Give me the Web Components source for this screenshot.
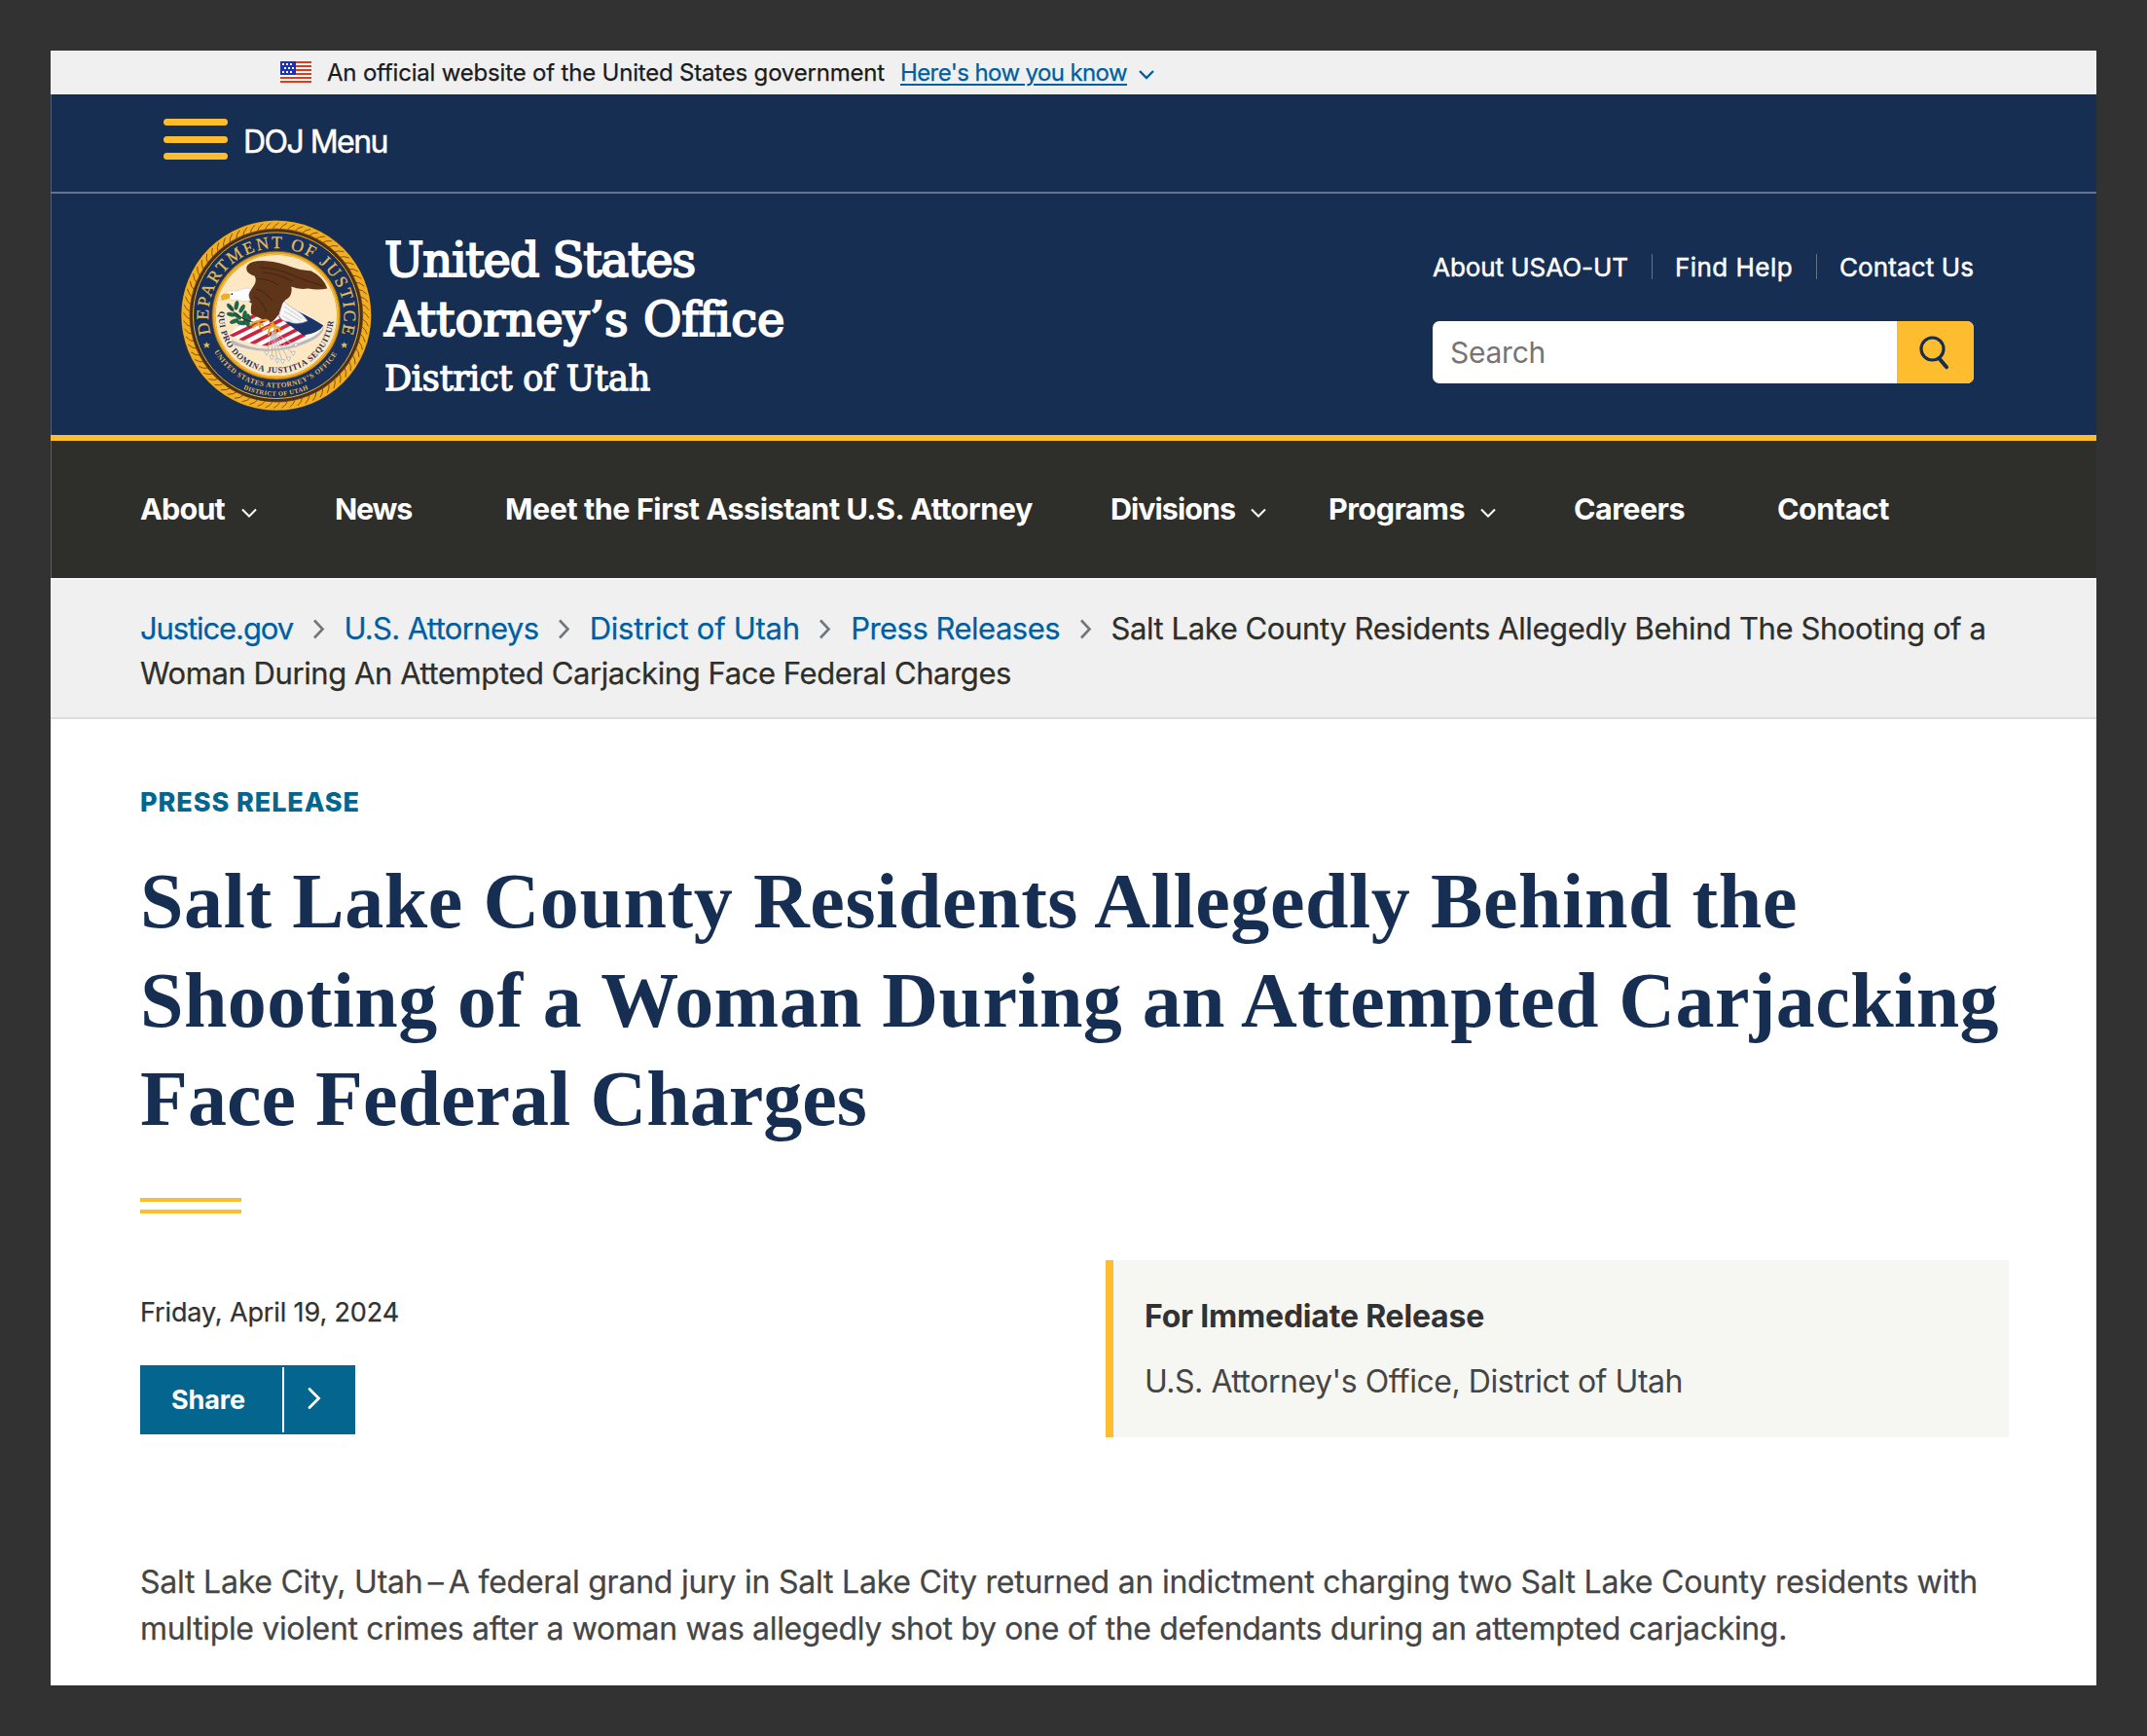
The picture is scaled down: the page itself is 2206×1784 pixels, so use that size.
<!DOCTYPE html>
<html lang="en">
<head>
<meta charset="utf-8">
<title>District of Utah | Press Release</title>
<style>
    * { box-sizing: border-box; }
    body {
        margin: 0;
        padding: 52px;
        height: 1784px;
        overflow: hidden;
        background: #323232;
        font-family: Inter, "Liberation Sans", sans-serif;
        --navy: #172e53;
        --gold: #febc2f;
        --teal: #04668f;
    }
    main {
        display: block;
        width: 2102px;
        height: 1680px;
        background: #fff;
        overflow: hidden;
    }
</style>
</head>
<body>
<main>
    <gov-banner></gov-banner>
    <doj-menu></doj-menu>
    <site-header></site-header>
    <main-nav></main-nav>
    <bread-crumb></bread-crumb>
    <press-release></press-release>
</main>

<script>
class BaseElement extends HTMLElement {

    constructor() {
        super();
        this.shadowDOM = this.attachShadow({ mode: "open" });
    }

    connectedCallback() {
        this.render();
    }
}

class GovBanner extends BaseElement {

    stars() {
        let out = "";
        [[2, 2], [4, 6], [2, 10]].forEach(([x, y]) => {
            for (let i = 0; i < 3; i++) {
                out += `<rect x="${x + i * 4}" y="${y}" width="2" height="2" fill="#fff"/>`;
            }
        });
        return out;
    }

    render() {
        this.shadowDOM.innerHTML = `
        <style>
            :host {
                display: flex;
                align-items: center;
                height: 45px;
                padding-left: 236px;
                background: #f0f0f0;
                color: #1b1b1b;
                font-size: 24px;
                line-height: 45px;
                -webkit-text-stroke: .25px;
            }
            .flag { margin: 0 16px 1px 0; }
            .link {
                margin-left: 16px;
                color: #005ea2;
                text-decoration: underline;
                text-decoration-thickness: 2px;
                text-underline-offset: 3px;
            }
            .chevron { margin: 4px 0 0 11px; }
        </style>
        <svg class="flag" width="32" height="22" viewBox="0 0 32 22">
            <rect width="32" height="22" fill="#fff"/>
            <path d="M0 1h32M0 5h32M0 9h32M0 13h32M0 17h32M0 21h32" stroke="#db3e1f" stroke-width="2"/>
            <rect width="16" height="14" fill="#1e33b1"/>
            ${this.stars()}
        </svg>
        <fit-text width="573">An official website of the United States government</fit-text>
        <fit-text class="link" width="233">Here's how you know</fit-text>
        <svg class="chevron" width="18" height="12" viewBox="0 0 18 12">
            <path d="M2 2l7 7 7-7" fill="none" stroke="#005ea2" stroke-width="2.4"/>
        </svg>
        `;
    }
}

class DojMenu extends BaseElement {

    render() {
        this.shadowDOM.innerHTML = `
        <style>
            :host {
                display: flex;
                box-sizing: border-box;
                height: 102px;
                padding: 25px 0 0 116px;
                background: var(--navy);
                border-bottom: 2px solid #66758d;
                box-shadow: inset 1px 0 #4d5d78;
                color: #fff;
            }
            .bars {
                display: flex;
                flex-direction: column;
                gap: 10.5px;
                width: 66px;
            }
            .bars i {
                height: 7px;
                border-radius: 3.5px;
                background: var(--gold);
            }
            fit-text {
                margin: 3px 0 0 16px;
                height: 40px;
                font-size: 32px;
                line-height: 41px;
                -webkit-text-stroke: .5px #fff;
            }
        </style>
        <div class="bars"><i></i><i></i><i></i></div>
        <fit-text width="148">DOJ Menu</fit-text>
        `;
    }
}

class DojSeal extends BaseElement {

    rope() {
        let out = "";
        for (let i = 0; i < 72; i++) {
            out += `<path transform="rotate(${i * 5} 341.5 343)" d="M329 79q5-14 21-22" fill="none" stroke="#7a4a16" stroke-width="2.6"/>`;
        }
        return out;
    }

    leaves() {
        const spots = [[200, 318, 50], [219, 312, 100], [236, 322, 120], [203, 340, 10], [222, 345, 40],
            [244, 342, 100], [212, 361, -20], [234, 366, 10], [252, 368, 50], [256, 352, 80]];
        return spots.map(([x, y, r]) => `<ellipse cx="${x}" cy="${y}" rx="14" ry="6" transform="rotate(${r} ${x} ${y})"/>`).join("");
    }

    arrows() {
        return [[312, 462], [328, 476], [345, 486], [362, 488], [380, 480], [394, 463], [402, 438]]
            .map(([x, y]) => `<path d="M330 392L${x} ${y}"/><path d="M${x - 7} ${y - 8}l7 12 6-13z" fill="#fff"/>`).join("");
    }

    render() {
        this.shadowDOM.innerHTML = `
        <style>
            :host { display: block; width: 197px; height: 197px; }
            svg { display: block; }
            text { font-family: "Liberation Serif", serif; }
        </style>
        <svg width="197" height="197" viewBox="48 48.5 591 591">
            <defs>
                <path id="top" d="M140 400A209 209 0 1 1 543 400"/>
                <path id="office" d="M150 455A221 221 0 0 0 533 455"/>
                <path id="district" d="M240 569A248 248 0 0 0 443 569"/>
                <path id="motto" d="M165 330A177 177 0 1 0 518 330"/>
                <clipPath id="shield"><path d="M196 404L275 322Q350 300 425 335L487 374Q470 404 425 420Q320 462 196 404z"/></clipPath>
            </defs>
            <circle cx="341.5" cy="343" r="293" fill="#8a5c1c"/>
            <circle cx="341.5" cy="343" r="280" fill="none" stroke="#f2ae1d" stroke-width="24"/>
            ${this.rope()}
            <circle cx="341.5" cy="343" r="266" fill="#4a301d"/>
            <circle cx="341.5" cy="343" r="256" fill="#17305c" stroke="#f0b32a" stroke-width="3"/>
            <circle cx="341.5" cy="343" r="192" fill="#fee8c4" stroke="#e39d18" stroke-width="11"/>
            <circle cx="341.5" cy="343" r="190" fill="none" stroke="#fbc944" stroke-width="3"/>
            <circle cx="341.5" cy="343" r="198" fill="none" stroke="#73501f" stroke-width="2"/>

            <g fill="#e5bd5b">
                <text font-size="53" stroke="#e5bd5b" stroke-width=".8"><textPath href="#top" textLength="768">DEPARTMENT OF JUSTICE</textPath></text>
                <text font-size="22" font-weight="bold"><textPath href="#office" textLength="455">UNITED STATES ATTORNEY’S OFFICE</textPath></text>
                <text font-size="20" font-weight="bold"><textPath href="#district" textLength="206">DISTRICT OF UTAH</textPath></text>
                <path id="star" d="M127 424l3 7 8 0-6 5 3 8-8-5-7 5 2-8-6-5 8 0z"/>
                <use href="#star" x="424"/>
            </g>
            <text font-size="26" font-weight="bold" fill="#26315c"><textPath href="#motto" textLength="552">QUI PRO DOMINA JUSTITIA SEQUITUR</textPath></text>

            <path d="M204 418Q320 475 430 420Q480 402 487 376L487 388Q476 412 430 430Q320 474 204 432z" fill="#b6b9c4"/>
            <g clip-path="url(#shield)">
                <rect x="190" y="300" width="300" height="160" fill="#fff"/>
                <path d="M186 360L300 308M190 385L320 322M200 408L350 335M230 420L370 350M262 432L390 366M300 440L410 384M345 443L430 401" stroke="#cf2340" stroke-width="11"/>
                <path d="M385 318L490 372Q470 400 425 404L348 348z" fill="#1b3568"/>
            </g>
            <g fill="#1c6a4b" stroke="#123f30" stroke-width="1">${this.leaves()}</g>
            <path d="M196 312Q215 350 275 366" stroke="#173b2c" stroke-width="3" fill="none"/>
            <g stroke="#b9bcc2" stroke-width="3" fill="none">${this.arrows()}</g>
            <path d="M362 296Q385 318 402 326Q425 340 438 360Q405 374 380 362Q358 362 350 344z" fill="#f6f6f6" stroke="#a9adb7" stroke-width="2"/>
            <path d="M366 330l50 30M366 315l56 38M362 345l30 17" stroke="#b6bac4" stroke-width="2"/>
            <path d="M264 262Q285 240 275 222Q246 212 250 194Q258 172 310 175Q355 178 392 195Q420 206 448 205Q488 225 499 260Q470 266 440 260Q410 264 388 254Q392 276 378 290Q360 300 356 320Q350 345 330 362L322 366Q316 345 300 356Q285 348 264 338Q262 320 266 306Q250 300 254 282z" fill="#5e3518"/>
            <path d="M290 195Q340 196 390 218T485 252M300 210Q350 215 392 238M282 230Q320 230 350 250M280 262Q310 270 330 300M275 285Q300 300 312 335" stroke="#3d210f" stroke-width="2.5" fill="none"/>
            <path d="M182 274Q200 262 222 268Q240 256 266 260Q250 276 262 298Q238 302 222 294Q205 298 190 290z" fill="#fff" stroke="#bfc3cc" stroke-width="1.5"/>
            <path d="M200 276Q176 272 170 284Q174 290 171 297Q184 296 198 290z" fill="#f3ad24"/>
            <circle cx="205" cy="277" r="2.5" fill="#222"/>
            <path d="M262 372Q282 356 314 358M270 380Q284 364 300 372M292 380L286 362M300 388Q318 372 352 380M318 402Q316 384 332 370M340 398Q338 380 330 364M354 392Q346 376 326 372" stroke="#e8a51f" stroke-width="6" fill="none" stroke-linecap="round"/>
        </svg>
        `;
    }
}

class SiteHeader extends BaseElement {

    render() {
        this.shadowDOM.innerHTML = `
        <style>
            :host {
                display: flex;
                box-sizing: border-box;
                height: 254px;
                padding: 27px 126px 0 134px;
                background: var(--navy);
                border-bottom: 6px solid var(--gold);
                box-shadow: inset 1px 0 #4d5d78;
                color: #fff;
            }
            .title {
                margin: 11px 0 0 12px;
                font-family: "DejaVu Serif", serif;
                font-size: 48px;
                line-height: 61px;
                -webkit-text-stroke: 2px #fff;
            }
            .title fit-text { display: block; }
            .title .district {
                font-size: 35px;
                line-height: 54px;
                margin-top: 3px;
                -webkit-text-stroke: 1.3px #fff;
            }
            .tools {
                width: 556px;
                margin-left: auto;
            }
            .links {
                display: flex;
                justify-content: space-between;
                align-items: center;
                height: 26px;
                margin-top: 35px;
                font-size: 26px;
                line-height: 26px;
                -webkit-text-stroke: .5px #fff;
            }
            .links fit-text { padding-top: 2px; }
            .links i {
                width: 1px;
                height: 26px;
                background: #64728a;
            }
            .search {
                display: flex;
                height: 64px;
                margin-top: 43px;
                border-radius: 7px;
                overflow: hidden;
                background: #fff;
                color: #757575;
                font-size: 30px;
                line-height: 65px;
            }
            .search fit-text { margin-left: 18px; }
            .button {
                display: flex;
                align-items: center;
                justify-content: center;
                width: 79px;
                margin-left: auto;
                padding-right: 3px;
                box-sizing: border-box;
                background: var(--gold);
            }
        </style>
        <doj-seal></doj-seal>
        <div class="title">
            <fit-text width="319">United States</fit-text>
            <fit-text width="410">Attorney’s Office</fit-text>
            <fit-text class="district" width="273">District of Utah</fit-text>
        </div>
        <div class="tools">
            <div class="links">
                <fit-text width="201">About USAO-UT</fit-text><i></i>
                <fit-text width="121">Find Help</fit-text><i></i>
                <fit-text width="138">Contact Us</fit-text>
            </div>
            <div class="search">
                <fit-text width="98">Search</fit-text>
                <div class="button">
                    <svg width="32" height="36" viewBox="0 0 32 36">
                        <circle cx="14.5" cy="14.5" r="11.5" fill="none" stroke="#172e53" stroke-width="3.2"/>
                        <path d="M21.5 24.5l7.5 8.8" stroke="#172e53" stroke-width="4" stroke-linecap="round"/>
                    </svg>
                </div>
            </div>
        </div>
        `;
    }
}

class MainNav extends BaseElement {

    get items() {
        return [
            { text: "About", width: 87, before: 0, open: 17 },
            { text: "News", width: 79, before: 80 },
            { text: "Meet the First Assistant U.S. Attorney", width: 542, before: 96 },
            { text: "Divisions", width: 128, before: 80, open: 16 },
            { text: "Programs", width: 140, before: 64, open: 16 },
            { text: "Careers", width: 114, before: 80 },
            { text: "Contact", width: 115, before: 95 },
        ];
    }

    render() {
        const chevron = (gap) => `
            <svg width="16" height="11" viewBox="0 0 16 11" style="margin: 9px 0 0 ${gap}px">
                <path d="M1 1.5l7 7 7-7" fill="none" stroke="#fff" stroke-width="2"/>
            </svg>`;
        this.shadowDOM.innerHTML = `
        <style>
            :host {
                display: flex;
                align-items: center;
                box-sizing: border-box;
                height: 141px;
                padding: 0 0 2px 92px;
                background: #2e2e2a;
                box-shadow: inset 1px 0 #5c5c59;
                color: #fff;
                font-size: 30.5px;
                font-weight: 700;
                line-height: 139px;
            }
        </style>
        ${this.items.map(i => `
            <fit-text width="${i.width}" style="margin-left: ${i.before}px">${i.text}</fit-text>
            ${i.open ? chevron(i.open) : ""}`).join("")}
        `;
    }
}

class BreadCrumb extends BaseElement {

    render() {
        const arrow = `
            <svg width="13" height="21" viewBox="0 0 13 21">
                <path d="M2 1.5l8.5 9-8.5 9" fill="none" stroke="#71767a" stroke-width="2.6"/>
            </svg>`;
        this.shadowDOM.innerHTML = `
        <style>
            :host {
                display: block;
                box-sizing: border-box;
                height: 145px;
                padding: 27px 0 0 92px;
                background: #f0f0f0;
                border-top: 2px solid #f7f7f7;
                border-bottom: 2px solid #dcdcdc;
                color: #2e2e2a;
                font-size: 31px;
                line-height: 46px;
                -webkit-text-stroke: .25px;
            }
            .row { display: flex; align-items: center; gap: 19.7px; }
            .link { color: #005ea2; }
        </style>
        <div class="row">
            <fit-text class="link" width="157">Justice.gov</fit-text>${arrow}
            <fit-text class="link" width="200">U.S. Attorneys</fit-text>${arrow}
            <fit-text class="link" width="216">District of Utah</fit-text>${arrow}
            <fit-text class="link" width="215">Press Releases</fit-text>${arrow}
            <fit-text width="899">Salt Lake County Residents Allegedly Behind The Shooting of a</fit-text>
        </div>
        <fit-text width="895">Woman During An Attempted Carjacking Face Federal Charges</fit-text>
        `;
    }
}

class ShareButton extends BaseElement {

    render() {
        this.shadowDOM.innerHTML = `
        <style>
            :host {
                display: flex;
                align-items: center;
                width: 221px;
                height: 71px;
                background: var(--teal);
                color: #fff;
                font-size: 27px;
                font-weight: 700;
                line-height: 69px;
            }
            fit-text { margin-left: 32px; }
            i {
                width: 2px;
                height: 67px;
                margin-left: 38px;
                background: #fff;
            }
            svg { margin: 0 0 3px 23px; }
        </style>
        <fit-text width="76"><slot></slot></fit-text>
        <i></i>
        <svg width="16" height="24" viewBox="0 0 16 24">
            <path d="M3 2.5l9.5 9.5L3 21.5" fill="none" stroke="#fff" stroke-width="2.8" stroke-linecap="round"/>
        </svg>
        `;
    }
}

class ReleaseBox extends BaseElement {

    render() {
        this.shadowDOM.innerHTML = `
        <style>
            :host {
                display: block;
                box-sizing: border-box;
                width: 928px;
                height: 182px;
                padding: 34px 0 0 32px;
                border-left: 8px solid var(--gold);
                background: #f6f6f2;
                color: #454545;
                font-size: 32px;
                line-height: 48px;
            }
            ::slotted([slot="heading"]) {
                margin-bottom: 19px;
                color: #323232;
                font-weight: 700;
            }
        </style>
        <slot name="heading"></slot>
        <slot></slot>
        `;
    }
}

class PressRelease extends BaseElement {

    render() {
        this.shadowDOM.innerHTML = `
        <style>
            :host {
                display: block;
                padding: 68px 90px 0 92px;
            }
            fit-text { display: block; }
            .label {
                color: var(--teal);
                font-size: 27px;
                font-weight: 800;
                line-height: 36px;
            }
            h1 {
                margin: 33px 0 0;
                color: var(--navy);
                font: bold 80px/101.5px "Liberation Serif", serif;
            }
            .rule {
                box-sizing: border-box;
                width: 104px;
                height: 16px;
                margin-top: 50px;
                border: solid var(--gold);
                border-width: 4px 0;
            }
            .meta {
                display: flex;
                justify-content: space-between;
                margin-top: 48px;
            }
            .date {
                margin: 36px 0 36px;
                color: #323232;
                font-size: 27px;
                line-height: 36px;
                -webkit-text-stroke: .25px;
            }
            .body {
                margin-top: 125px;
                color: #454545;
                font-size: 32px;
                line-height: 48.5px;
                -webkit-text-stroke: .25px;
            }
            .dash { word-spacing: -3.5px; }
        </style>
        <fit-text class="label" width="226">PRESS RELEASE</fit-text>
        <h1>
            <fit-text width="1703">Salt Lake County Residents Allegedly Behind the</fit-text>
            <fit-text width="1910">Shooting of a Woman During an Attempted Carjacking</fit-text>
            <fit-text width="747">Face Federal Charges</fit-text>
        </h1>
        <div class="rule"></div>
        <div class="meta">
            <div>
                <fit-text class="date" width="266">Friday, April 19, 2024</fit-text>
                <share-button>Share</share-button>
            </div>
            <release-box>
                <fit-text slot="heading" width="349">For Immediate Release</fit-text>
                <fit-text width="553">U.S. Attorney's Office, District of Utah</fit-text>
            </release-box>
        </div>
        <div class="body">
            <fit-text width="1888">Salt Lake City, Utah<span class="dash"> – </span>A federal grand jury in Salt Lake City returned an indictment charging two Salt Lake County residents with</fit-text>
            <fit-text width="1692">multiple violent crimes after a woman was allegedly shot by one of the defendants during an attempted carjacking.</fit-text>
        </div>
        `;
    }
}

// One line of text, tracked in or out so that it fills the given width
class FitText extends BaseElement {

    render() {
        const width = Number(this.getAttribute("width"));
        this.shadowDOM.innerHTML = `
        <style>
            :host { display: block; flex: none; width: ${width}px; white-space: nowrap; }
            span { display: inline-block; }
        </style><span><slot></slot></span>`;
        const span = this.shadowDOM.querySelector("span");
        const slot = this.shadowDOM.querySelector("slot");
        const length = slot.assignedNodes({ flatten: true }).map(n => n.textContent).join("").trim().length;
        const natural = span.getBoundingClientRect().width;
        span.style.letterSpacing = `${(width - natural) / length}px`;
        // inline-block drops the parent's underline, so take it over
        span.style.textDecoration = getComputedStyle(this).textDecoration;
        span.style.textUnderlineOffset = getComputedStyle(this).textUnderlineOffset;
    }
}

customElements.define("gov-banner", GovBanner);
customElements.define("doj-menu", DojMenu);
customElements.define("doj-seal", DojSeal);
customElements.define("site-header", SiteHeader);
customElements.define("main-nav", MainNav);
customElements.define("bread-crumb", BreadCrumb);
customElements.define("share-button", ShareButton);
customElements.define("release-box", ReleaseBox);
customElements.define("press-release", PressRelease);
// last, when every parent has its final font
customElements.define("fit-text", FitText);
</script>
</body>
</html>
